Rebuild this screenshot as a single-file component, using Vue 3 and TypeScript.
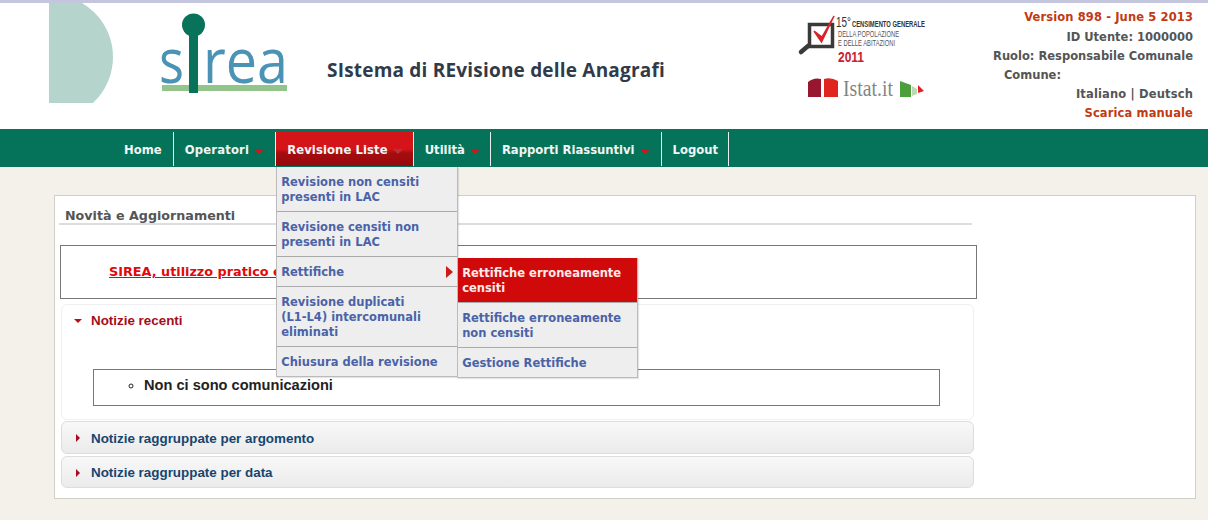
<script setup lang="ts">
interface NavItem {
  label: string
  caret?: boolean
  active?: boolean
}

interface SubEntry {
  lines: string[]
}

const navItems: NavItem[] = [
  { label: 'Home' },
  { label: 'Operatori', caret: true },
  { label: 'Revisione Liste', caret: true, active: true },
  { label: 'Utilità', caret: true },
  { label: 'Rapporti Riassuntivi', caret: true },
  { label: 'Logout' },
]

const revisioneMenu: SubEntry[] = [
  { lines: ['Revisione non censiti', 'presenti in LAC'] },
  { lines: ['Revisione censiti non', 'presenti in LAC'] },
  { lines: ['Rettifiche'] },
  { lines: ['Revisione duplicati', '(L1-L4) intercomunali', 'eliminati'] },
  { lines: ['Chiusura della revisione'] },
]

const rettificheMenu: SubEntry[] = [
  { lines: ['Rettifiche erroneamente', 'censiti'] },
  { lines: ['Rettifiche erroneamente', 'non censiti'] },
  { lines: ['Gestione Rettifiche'] },
]
</script>

<template>
  <div class="page">
    <header class="header">
      <svg class="deco" width="64" height="100" viewBox="49 3 64 100">
        <circle cx="50.500" cy="57" r="62.500" fill="#b5d5cc" />
      </svg>
      <svg class="sirea" width="130" height="85" viewBox="160 12 130 85">
        <rect x="162" y="85" width="125" height="6" fill="#93c48b" />
        <text x="159" y="83" class="sirea-text" textLength="25" lengthAdjust="spacingAndGlyphs">s</text>
        <text x="203" y="83" class="sirea-text" textLength="85" lengthAdjust="spacingAndGlyphs">rea</text>
        <rect x="189" y="28" width="9" height="65" fill="#08735a" />
        <circle cx="193.500" cy="25" r="11.500" fill="#08735a" />
      </svg>
      <h1 class="title">SIstema di REvisione delle Anagrafi</h1>
      <svg class="census" width="140" height="95" viewBox="795 10 140 95">
        <rect x="809.500" y="24.500" width="23" height="22" fill="none" stroke="#3a3a3a" stroke-width="3.500" />
        <path d="M808 46 L801 52" stroke="#3a3a3a" stroke-width="4.500" stroke-linecap="round" />
        <path d="M814 31 L821.500 42 L834 16 L822 37 Z" fill="#d8232a" stroke="#d8232a" stroke-width="1.500" />
        <text x="836" y="27" class="c15" textLength="15" lengthAdjust="spacingAndGlyphs">15°</text>
        <text x="852" y="27" class="cbold" textLength="73" lengthAdjust="spacingAndGlyphs">CENSIMENTO GENERALE</text>
        <text x="838" y="37" class="cthin" textLength="61" lengthAdjust="spacingAndGlyphs">DELLA POPOLAZIONE</text>
        <text x="838" y="46" class="cthin" textLength="57" lengthAdjust="spacingAndGlyphs">E DELLE ABITAZIONI</text>
        <text x="838" y="62" class="cyear" textLength="26" lengthAdjust="spacingAndGlyphs">2011</text>
        <path d="M808 82 Q814 77 821 79 V97 H808 Z" fill="#98172f" />
        <path d="M824 79 Q831 77 838 81 V97 H824 Z" fill="#e0251f" />
        <text x="843" y="96" class="cistat" textLength="50" lengthAdjust="spacingAndGlyphs">Istat.it</text>
        <path d="M900 81 L911 85 V97 L900 97 Z" fill="#4d9f3d" />
        <path d="M912 86 L917 89 V94 L912 96 Z" fill="#bcd9b4" />
        <path d="M918 85 L924 91 L918 93 Z" fill="#d8232a" />
      </svg>
      <div class="info">
        <div class="accent">Version 898 - June 5 2013</div>
        <div>ID Utente: 1000000</div>
        <div>Ruolo: Responsabile Comunale</div>
        <div class="comune">Comune:</div>
        <div class="lang">Italiano | Deutsch</div>
        <div class="accent">Scarica manuale</div>
      </div>
    </header>

    <nav class="nav">
      <div
        v-for="item in navItems"
        :key="item.label"
        class="nav-item"
        :class="{ active: item.active }"
      >
        {{ item.label }}
        <span v-if="item.caret" class="caret"></span>
        <ul v-if="item.active" class="menu">
          <li v-for="entry in revisioneMenu" :key="entry.lines[0]" class="menu-item">
            <span v-for="line in entry.lines" :key="line" class="menu-line">{{ line }}</span>
            <template v-if="entry.lines[0] === 'Rettifiche'">
              <span class="menu-arrow"></span>
              <ul class="menu submenu">
                <li
                  v-for="(sub, i) in rettificheMenu"
                  :key="sub.lines.join()"
                  class="menu-item"
                  :class="{ hover: i === 0 }"
                >
                  <span v-for="line in sub.lines" :key="line" class="menu-line">{{ line }}</span>
                </li>
              </ul>
            </template>
          </li>
        </ul>
      </div>
    </nav>

    <main class="main">
      <section class="panel">
        <h2 class="panel-title">Novità e Aggiornamenti</h2>
        <div class="rule"></div>
        <div class="manual-box">
          <a class="manual-link">SIREA, utilizzo pratico e</a>
        </div>
        <div class="accordion">
          <div class="acc-open">
            <div class="acc-label"><span class="tri-down"></span>Notizie recenti</div>
            <div class="news-box">
              <ul class="news-list">
                <li>Non ci sono comunicazioni</li>
              </ul>
            </div>
          </div>
          <div class="acc-closed">
            <span class="tri-right"></span>Notizie raggruppate per argomento
          </div>
          <div class="acc-closed">
            <span class="tri-right"></span>Notizie raggruppate per data
          </div>
        </div>
      </section>
    </main>
  </div>
</template>

<style>
html,
body {
  margin: 0;
  overflow: hidden;
}
</style>

<style scoped>
.page {
  width: 1208px;
  height: 520px;
  overflow: hidden;
  background: #f3f1ea;
  font-family: "DejaVu Sans", Verdana, sans-serif;
  font-size: 11.5px;
  font-weight: bold;
}

.header {
  display: flex;
  align-items: flex-start;
  height: 126px;
  background: #fff;
  border-top: 3px solid #c3c6dc;
}

.deco {
  margin-left: 49px;
  flex: none;
}

.sirea {
  margin: 9px 0 0 47px;
  flex: none;
}

.sirea-text {
  fill: #4a93b5;
  font-family: "Open Sans", sans-serif;
  font-size: 62px;
  font-weight: 400;
}

.c15 {
  fill: #333;
  font-family: "Liberation Sans", sans-serif;
  font-size: 15px;
  font-weight: 400;
}

.cbold {
  fill: #333;
  font-family: "Liberation Sans", sans-serif;
  font-size: 9px;
  font-weight: 700;
}

.cthin {
  fill: #555;
  font-family: "Liberation Sans", sans-serif;
  font-size: 9px;
  font-weight: 400;
}

.cyear {
  fill: #c8202a;
  font-family: "Liberation Sans", sans-serif;
  font-size: 15px;
  font-weight: 700;
}

.cistat {
  fill: #7f8786;
  font-family: "Liberation Serif", serif;
  font-size: 23px;
  font-weight: 400;
}

.title {
  margin: 54px 0 0 37px;
  color: #2f3b4a;
  font-family: "Open Sans", sans-serif;
  font-size: 19px;
  font-weight: 700;
  letter-spacing: 0.2px;
  line-height: 26px;
  white-space: nowrap;
}

.census {
  margin: 7px 0 0 auto;
  flex: none;
}

.info {
  width: 273px;
  margin-top: 5px;
  padding-right: 15px;
  flex: none;
  color: #555;
  line-height: 19px;
  text-align: right;
  box-sizing: border-box;
  white-space: nowrap;
}

.info > div:not(:first-child) {
  position: relative;
  top: 1px;
}

.accent {
  color: #c23a12;
  letter-spacing: 0.12px;
}

.lang {
  letter-spacing: 0.15px;
}

.comune {
  padding-right: 132px;
}

.nav {
  display: flex;
  height: 35px;
  padding: 3px 0 0 113px;
  background: #05735a;
  position: relative;
  z-index: 2;
}

.nav-item {
  position: relative;
  display: flex;
  align-items: center;
  gap: 5px;
  height: 34px;
  padding: 1px 11px 0;
  border-right: 1px solid #e8efec;
  box-sizing: border-box;
  color: #f1f5f3;
  font-size: 11.6px;
  white-space: nowrap;
}

.nav-item:nth-child(2) {
  letter-spacing: 0.2px;
}

.nav-item:nth-child(3) {
  padding-right: 10px;
  letter-spacing: 0.1px;
}

.nav-item:nth-child(4),
.nav-item:nth-child(6) {
  padding-right: 10px;
}

.nav-item.active {
  background: linear-gradient(#d5141a 0, #d5141a 50%, #a50d10 62%, #96090c 100%);
}

.caret {
  width: 0;
  height: 0;
  margin-top: 3px;
  border-left: 5px solid transparent;
  border-right: 5px solid transparent;
  border-top: 5px solid #d5141a;
}

.active .caret {
  border-top-color: #b5333a;
}

.menu {
  position: absolute;
  top: 35px;
  left: 0;
  width: 182px;
  margin: 0;
  padding: 0;
  list-style: none;
  background: #eee;
  border: 1px solid #bbb;
  border-top: 0;
  box-sizing: border-box;
  box-shadow: 1px 1px 1px rgba(0, 0, 0, 0.1);
  letter-spacing: 0;
}

.menu-item {
  position: relative;
  padding: 8px 4px 6px;
  border-bottom: 1px solid #aaa;
  color: #4a63a8;
  font-size: 11.5px;
  line-height: 15px;
}

.menu-line {
  display: block;
}

.menu-item:last-child {
  border-bottom: 0;
}

.menu-item.hover {
  background: #d00a0a;
  color: #fbeaea;
}

.menu-arrow {
  position: absolute;
  right: 4px;
  top: 9px;
  width: 0;
  height: 0;
  border-top: 6px solid transparent;
  border-bottom: 6px solid transparent;
  border-left: 7px solid #cc1a1a;
}

.submenu {
  top: 1px;
  left: 180px;
  width: 181px;
  z-index: 1;
}

.main {
  padding: 28px 12px 0 54px;
}

.panel {
  height: 304px;
  padding: 0 4px;
  background: #fff;
  border: 1px solid #cfcfc6;
  box-sizing: border-box;
}

.panel-title {
  margin: 0;
  padding: 13px 0 0 6px;
  color: #555;
  font-size: 12.7px;
  font-weight: bold;
  line-height: 14px;
}

.rule {
  width: 913px;
  height: 2px;
  background: #ddd;
}

.manual-box {
  width: 917px;
  height: 54px;
  margin: 20px 0 5px 1px;
  padding: 18px 0 0 48px;
  border: 1px solid #777;
  box-sizing: border-box;
}

.manual-link {
  color: #e00a0a;
  font-size: 12.8px;
  text-decoration: underline;
}

.accordion {
  width: 913px;
  margin-left: 2px;
  font-family: "Liberation Sans", Arial, sans-serif;
  font-size: 13.4px;
}

.acc-open {
  height: 116px;
  margin-bottom: 1px;
  border: 1px solid #f0f0f0;
  border-radius: 6px;
  box-sizing: border-box;
}

.acc-label {
  display: flex;
  align-items: center;
  height: 31px;
  padding-left: 12px;
  color: #a50d1a;
}

.tri-down {
  width: 0;
  height: 0;
  margin-right: 9px;
  border-left: 4px solid transparent;
  border-right: 4px solid transparent;
  border-top: 4px solid #b30f1a;
}

.tri-right {
  width: 0;
  height: 0;
  margin: 0 11px 0 2px;
  border-top: 4px solid transparent;
  border-bottom: 4px solid transparent;
  border-left: 4px solid #a50d1a;
}

.news-box {
  width: 847px;
  height: 37px;
  margin: 33px 0 0 31px;
  border: 1px solid #777;
  box-sizing: border-box;
}

.news-list {
  margin: 0;
  padding: 7px 0 0 50px;
  color: #222;
  list-style: circle;
  font-size: 14.6px;
  line-height: 16px;
}

.acc-closed {
  display: flex;
  align-items: center;
  height: 33px;
  margin-bottom: 2px;
  padding: 1px 0 0 12px;
  color: #16456f;
  background: linear-gradient(#f8f8f8, #ebebeb);
  border: 1px solid #ddd;
  border-radius: 6px;
  box-sizing: border-box;
}

.acc-closed:last-child {
  height: 32px;
}
</style>
